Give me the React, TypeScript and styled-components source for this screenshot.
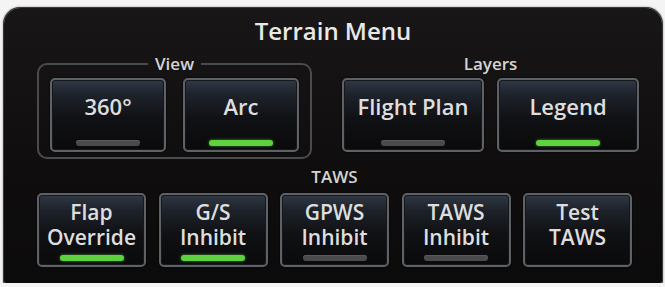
import styled, { createGlobalStyle } from "styled-components";

const GlobalStyle = createGlobalStyle`
  html, body {
    margin: 0;
    padding: 0;
    background: #f4f4f4;
  }
  body {
    font-family: "Open Sans", "DejaVu Sans", sans-serif;
  }
`;

interface Toggle {
  label: string[];
  on?: boolean;
  indicator?: boolean;
}

const viewButtons: Toggle[] = [
  { label: ["360°"], on: false, indicator: true },
  { label: ["Arc"], on: true, indicator: true },
];

const layerButtons: Toggle[] = [
  { label: ["Flight Plan"], on: false, indicator: true },
  { label: ["Legend"], on: true, indicator: true },
];

const tawsButtons: Toggle[] = [
  { label: ["Flap", "Override"], on: true, indicator: true },
  { label: ["G/S", "Inhibit"], on: true, indicator: true },
  { label: ["GPWS", "Inhibit"], on: false, indicator: true },
  { label: ["TAWS", "Inhibit"], on: false, indicator: true },
  { label: ["Test", "TAWS"], indicator: false },
];

function MenuButton({ item, tall }: { item: Toggle; tall?: boolean }) {
  return (
    <Button type="button">
      <Label tall={tall}>
        {item.label.map((line) => (
          <LabelLine key={line}>{line}</LabelLine>
        ))}
      </Label>
      {item.indicator ? <Indicator on={item.on} /> : <IndicatorSpace />}
    </Button>
  );
}

export default function App() {
  return (
    <>
      <GlobalStyle />
      <Panel>
        <Title>Terrain Menu</Title>
        <TopRow>
          <Group bordered>
            <Legend>View</Legend>
            <ViewGrid>
              {viewButtons.map((b) => (
                <MenuButton key={b.label.join()} item={b} />
              ))}
            </ViewGrid>
          </Group>
          <Group>
            <Legend>Layers</Legend>
            <LayerGrid>
              {layerButtons.map((b) => (
                <MenuButton key={b.label.join()} item={b} />
              ))}
            </LayerGrid>
          </Group>
        </TopRow>
        <TawsSection>
          <SectionLabel>TAWS</SectionLabel>
          <TawsGrid>
            {tawsButtons.map((b) => (
              <MenuButton key={b.label.join()} item={b} tall />
            ))}
          </TawsGrid>
        </TawsSection>
      </Panel>
    </>
  );
}

const Panel = styled.div`
  margin: 8px 3px 0 4px;
  padding: 9px 0 16px 33px;
  box-sizing: border-box;
  width: 658px;
  border-radius: 16px 16px 2px 2px;
  background: linear-gradient(to bottom, #181616 0%, #0f0d0d 60%, #0c0b0b 100%);
  box-shadow: 0 0 0 1px #3a3838, 0 0 2px 1px #8a8888;
  color: #e6e6e6;
  display: flex;
  flex-direction: column;
`;

const Title = styled.div`
  margin-left: -33px;
  text-align: center;
  font-size: 24px;
  line-height: 28px;
  font-weight: 600;
  color: #e8e8e8;
`;

const TopRow = styled.div`
  display: flex;
  gap: 28px;
  margin-top: 9px;
`;

const Group = styled.fieldset<{ bordered?: boolean }>`
  margin: 0;
  padding: 4px ${(p) => (p.bordered ? "11px" : "0")} 5px;
  border: 2px solid ${(p) => (p.bordered ? "#4a4b4d" : "transparent")};
  border-radius: 10px;
  min-width: 0;
`;

const Legend = styled.legend`
  margin: 0 auto;
  padding: 0 7px;
  font-size: 17px;
  line-height: 20px;
  font-weight: 600;
  color: #d4d4d4;
`;

const ViewGrid = styled.div`
  display: grid;
  grid-template-columns: 116px 116px;
  column-gap: 17px;
  height: 74px;
`;

const LayerGrid = styled.div`
  display: grid;
  grid-template-columns: 142px 142px;
  column-gap: 13px;
  height: 74px;
`;

const TawsSection = styled.div`
  margin-top: 8px;
  display: flex;
  flex-direction: column;
`;

const SectionLabel = styled.div`
  text-align: center;
  width: 595px;
  font-size: 17px;
  line-height: 20px;
  font-weight: 600;
  color: #d4d4d4;
  margin-bottom: 6px;
`;

const TawsGrid = styled.div`
  display: grid;
  grid-template-columns: repeat(5, 109px);
  column-gap: 12.5px;
  height: 74px;
`;

const Button = styled.button`
  margin: 0;
  padding: 0;
  box-sizing: border-box;
  height: 100%;
  display: flex;
  flex-direction: column;
  align-items: center;
  border: 2px solid #5e6165;
  border-radius: 5px;
  background: linear-gradient(
    to bottom,
    #303844 0%,
    #1d222a 22%,
    #101114 55%,
    #0a0a0b 100%
  );
  box-shadow: inset 0 0 0 1px #15171b, 0 0 2px #000;
  color: #dedede;
  font-family: "Open Sans", "DejaVu Sans", sans-serif;
  cursor: pointer;
`;

const Label = styled.div<{ tall?: boolean }>`
  flex: 1;
  display: flex;
  flex-direction: column;
  justify-content: center;
  align-items: center;
  padding-bottom: ${(p) => (p.tall ? "1px" : "8px")};
  font-size: ${(p) => (p.tall ? "21px" : "22px")};
  font-weight: 600;
  white-space: nowrap;
`;

const LabelLine = styled.span`
  display: block;
  height: 25px;
  line-height: 25px;
`;

const Indicator = styled.div<{ on?: boolean }>`
  width: 64px;
  height: 6px;
  border-radius: 3px;
  margin-bottom: 4px;
  flex-shrink: 0;
  background: ${(p) => (p.on ? "#5ed23e" : "#4a4a4a")};
  box-shadow: ${(p) =>
    p.on ? "0 0 3px rgba(110, 230, 80, 0.6)" : "inset 0 1px 0 #5a5a5a"};
`;

const IndicatorSpace = styled.div`
  height: 6px;
  margin-bottom: 4px;
  flex-shrink: 0;
`;
